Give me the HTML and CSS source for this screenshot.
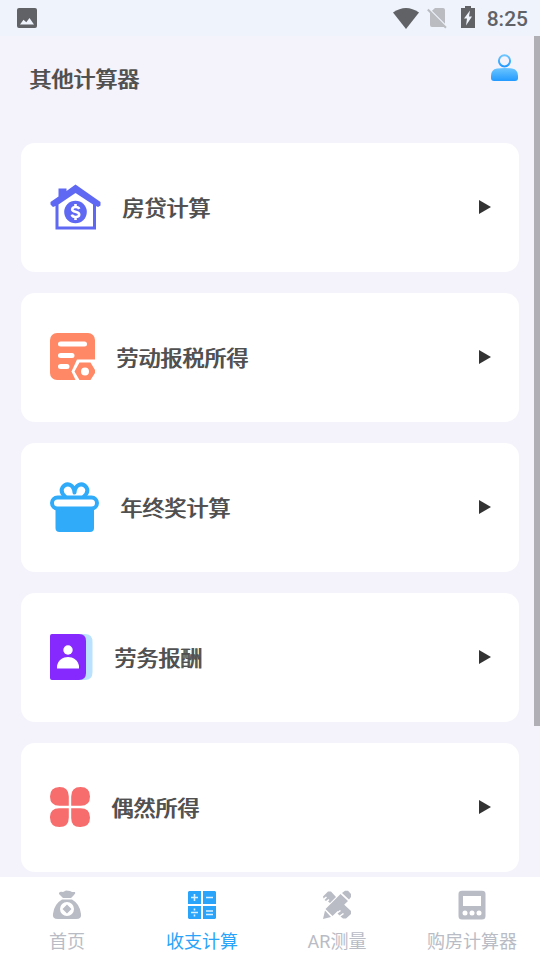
FILE: index.html
```html
<!DOCTYPE html>
<html lang="zh-CN">
<head>
<meta charset="utf-8">
<meta name="viewport" content="width=device-width, initial-scale=1">
<title>其他计算器</title>
<link rel="stylesheet" href="styles.css">
</head>
<body>
<div class="status">
  <svg class="status-photo" width="20" height="20" viewBox="0 0 20 20"><path fill="#606266" fill-rule="evenodd" d="M2 0H18Q20 0 20 2V18Q20 20 18 20H2Q0 20 0 18V2Q0 0 2 0ZM3 16.500H17L12.500 10L9.300 14.300L6.500 11.800Z"/></svg>
  <svg width="26" height="21" viewBox="0 0 26 21"><path fill="#606266" d="M0 4.500Q13-4.500 26 4.500L13 21Z"/></svg>
  <svg class="status-sim" width="20" height="22" viewBox="0 0 20 22"><path fill="#babcc1" d="M8 1H16Q18 1 18 3V16.800L5 3.800ZM3 5L17.500 19.500Q17 20 16 20H5Q3 20 3 18Z"/><path stroke="#babcc1" stroke-width="2" d="M.8 2.500L19 20.700"/></svg>
  <svg class="status-battery" width="14" height="22" viewBox="0 0 14 22"><path fill="#606266" fill-rule="evenodd" d="M4 0H10V2H14V22H0V2H4ZM9 4.500L3 12.500H6L5 19.500L11 10.500H8Z"/></svg>
  <span class="clock">8:25</span>
</div>
<main class="content">
  <header class="header">
    <h1>其他计算器</h1>
    <button class="profile" type="button" aria-label="个人中心">
      <svg width="27" height="27" viewBox="0 0 27 27"><defs><linearGradient id="blue" x1="0" y1="0" x2="0" y2="1"><stop stop-color="#6bc5ff"/><stop offset="1" stop-color="#239aff"/></linearGradient></defs><circle cx="13.500" cy="6.800" r="5.600" fill="none" stroke="url(#blue)" stroke-width="2"/><path fill="url(#blue)" d="M6 14.500Q13.500 13.500 21 14.500Q27 15.500 27 22V24Q27 27 24 27H3Q0 27 0 24V22Q0 15.500 6 14.500Z"/></svg>
    </button>
  </header>
  <nav class="cards" aria-label="计算器列表">
    <a class="card" href="#mortgage">
      <svg width="51" height="46" viewBox="0 0 50 46"><path fill="#5f68f3" fill-rule="evenodd" d="M25 .5L50 18V21.500L47.500 23L45.500 22V45.500H5V22L2.500 23L0 20.500V18L8 12.500V4.500H16V7ZM8 20.500V42.500H42.500V20.500L25 9Z"/><circle cx="25" cy="28" r="11.300" fill="#5f68f3"/><path fill="none" stroke="#fff" stroke-width="2.600" d="M28.700 25Q28 23 25.500 23Q21.700 23 21.700 25.500C21.700 28.500 28.700 27 28.700 30.500Q28.700 33 25 33Q22 33 21.300 30.700M25 20V23.500M25 32.500V36"/></svg>
      <span class="label">房贷计算</span><i class="arrow"></i>
    </a>
    <a class="card" href="#labor-tax">
      <svg width="45" height="48" viewBox="0 0 45 48"><rect width="45" height="47" rx="7" fill="#ff8966"/><path stroke="#fff" stroke-width="5" stroke-linecap="round" d="M10.500 11H34.500M10.500 22.500H22M10.500 33.500H17"/><path fill="#fff" d="M27 26.500H45V48H26L21.500 38.500Z"/><path fill="#ff8966" fill-rule="evenodd" d="M29.500 29.500H40.500L45 37V40L40.500 47H29.500L24.500 38.500ZM35 34.500A4 4 0 1 0 35 42.500A4 4 0 1 0 35 34.500Z"/></svg>
      <span class="label">劳动报税所得</span><i class="arrow"></i>
    </a>
    <a class="card" href="#bonus">
      <svg width="49" height="50" viewBox="0 0 49 50"><path fill="#30abfa" d="M5.500 24H44V46Q44 50 40 50H9.500Q5.500 50 5.500 46Z"/><rect x="2" y="15.500" width="45" height="11" rx="5.500" fill="#fff" stroke="#30abfa" stroke-width="4"/><path fill="none" stroke="#30abfa" stroke-width="4" stroke-linecap="round" stroke-linejoin="round" d="M15 14.500Q10 10 12.500 5.500C17-.5 24 3 24.500 10.500C25 3 32-.5 36.500 5.500Q39 10 34 14.500"/></svg>
      <span class="label">年终奖计算</span><i class="arrow"></i>
    </a>
    <a class="card" href="#service">
      <svg width="43" height="46" viewBox="0 0 43 46"><path fill="#bae2ff" d="M28 0H35Q42.500 0 42.500 8V38Q42.500 46 35 46H28Z"/><path fill="#8529ff" d="M2 0H29Q36 0 36 7V39Q36 46 29 46H2Q0 46 0 44V2Q0 0 2 0Z"/><circle cx="18" cy="16" r="4.700" fill="#fff"/><path fill="#fff" d="M7 34.500V32C8 26 13 23 18 23S28 26 29 32V34.500Z"/></svg>
      <span class="label">劳务报酬</span><i class="arrow"></i>
    </a>
    <a class="card" href="#incidental">
      <svg width="40" height="40" viewBox="0 0 40 40"><path fill="#f76d6d" d="M9.500 0Q18.800 0 18.800 9.500V18.800H9.500Q0 18.800 0 9.500T9.500 0ZM30.500 0Q40 0 40 9.500T30.500 18.800H21.200V9.500Q21.200 0 30.500 0ZM9.500 21.200H18.800V30.500Q18.800 40 9.500 40T0 30.500T9.500 21.200ZM21.200 21.200H30.500Q40 21.200 40 30.500T30.500 40T21.200 30.500Z"/></svg>
      <span class="label">偶然所得</span><i class="arrow"></i>
    </a>
  </nav>
  <div class="scrollbar"></div>
</main>
<nav class="tabs" aria-label="主导航">
  <a class="tab" href="#home">
    <svg width="30" height="30" viewBox="0 0 30 30"><path fill="#b9bcc5" fill-rule="evenodd" d="M7 3Q8 1 11 2L14 .5L18 1L20 2L23 2Q24 3 22 5L19 8H11L7 4ZM10 9.500H20Q28 14 29 24Q30 29 24 29H6Q0 29 1 24Q2 14 10 9.500ZM15 12A7 7 0 1 0 15 26A7 7 0 1 0 15 12ZM15 14.500L19.500 19L15 23.500L10.500 19Z"/></svg>
    <span>首页</span>
  </a>
  <a class="tab active" href="#income" aria-current="page">
    <svg width="30" height="30" viewBox="0 0 30 30"><path fill="#2aa4fb" d="M2 1H14V14H1V2ZM16 1H28L29 2V14H16ZM1 16H14V29H2L1 28ZM16 16H29V28L28 29H16Z"/><path stroke="#d8f0ff" stroke-width="1.600" d="M4 7.500H11M7.500 4V11M19 7.500H26M4 22.500H11M19 21H26M19 24.500H26M7.500 18.500V20.500M7.500 24.500V26.500"/></svg>
    <span>收支计算</span>
  </a>
  <a class="tab" href="#ar">
    <svg width="30" height="30" viewBox="0 0 30 30"><path fill="#b9bcc5" d="M1 6.500L6 1.500H9L14 7L8 13L6 11.500L7.500 10L6.500 9L4 11L2.500 10L5 7.500L4 6.500L1.500 8.500ZM22 14.500L29 21V24L24 28.500H21L18.500 26.500L22 24L21 23L17.500 25.500L15.500 23.500L19 21L18 20L16 21.500L15.500 20.500ZM18.500 4L26 11L10.500 26L3.500 19ZM20 3L23 .8H26L29 4V7L27 9.500ZM3 20.500L9 27L1 29Z"/></svg>
    <span>AR测量</span>
  </a>
  <a class="tab" href="#house">
    <svg width="30" height="30" viewBox="0 0 30 30"><path fill="#b9bcc5" fill-rule="evenodd" d="M5 .8H25Q28.500 .8 28.500 4V26Q28.500 29.500 25 29.500H5Q1.500 29.500 1.500 26V4Q1.500 .8 5 .8ZM6 6V16H24V6Z"/><g fill="#fff"><circle cx="8" cy="23" r="2.500"/><circle cx="15" cy="23" r="2.500"/><circle cx="22" cy="23" r="2.500"/></g></svg>
    <span>购房计算器</span>
  </a>
</nav>
</body>
</html>
```
FILE: styles.css
```css
* {
  box-sizing: border-box;
}

body {
  display: flex;
  flex-direction: column;
  height: 100vh;
  margin: 0;
  background: #f4f3fc;
  color: #505050;
  font-family: Roboto, "Noto Sans CJK SC", sans-serif;
}

svg {
  display: block;
  flex: none;
}

a {
  color: inherit;
  text-decoration: none;
}

.status {
  display: flex;
  flex: none;
  align-items: center;
  height: 36px;
  padding: 0 12px 0 17px;
  background: #eff3fc;
  color: #606266;
}

.status-photo {
  margin-right: auto;
}

.status-sim {
  margin-left: 8px;
}

.status-battery {
  margin: 0 12px 2px 14px;
}

.clock {
  padding-top: 2px;
  font-size: 21px;
  font-weight: 500;
  line-height: 24px;
}

.content {
  position: relative;
  flex: 1;
  min-height: 0;
  overflow: hidden;
}

.header {
  display: flex;
  align-items: flex-start;
  justify-content: space-between;
  height: 107px;
  padding: 18px 22px 0 29px;
}

h1,
.label {
  font-size: 22px;
  font-weight: 400;
  line-height: 32px;
  text-shadow: 1px 0 currentColor;
}

h1 {
  margin: 10px 0 0;
}

.profile {
  padding: 0;
  border: 0;
  background: none;
}

.cards {
  display: grid;
  gap: 21px;
  padding: 0 21px 21px;
}

.card {
  display: flex;
  align-items: center;
  gap: 21px;
  height: 129px;
  padding: 0 28px 2px 29px;
  border-radius: 14px;
  background: #fff;
}

.label {
  padding-top: 4px;
}

.arrow {
  margin-left: auto;
  border-style: solid;
  border-width: 7px 0 7px 12px;
  border-color: transparent transparent transparent #333;
}

.scrollbar {
  position: absolute;
  top: 0;
  right: 0;
  width: 6px;
  height: 82%;
  background: #b0afb5;
}

.tabs {
  display: grid;
  flex: none;
  grid-template-columns: repeat(4, 1fr);
  padding: 13px 0 5px;
  background: #fff;
}

.tab {
  display: flex;
  flex-direction: column;
  align-items: center;
  gap: 8px;
  padding-right: 1px;
  color: #b9bcc5;
  font-size: 18px;
  line-height: 27px;
}

.tab.active {
  color: #2aa4fb;
}
```
